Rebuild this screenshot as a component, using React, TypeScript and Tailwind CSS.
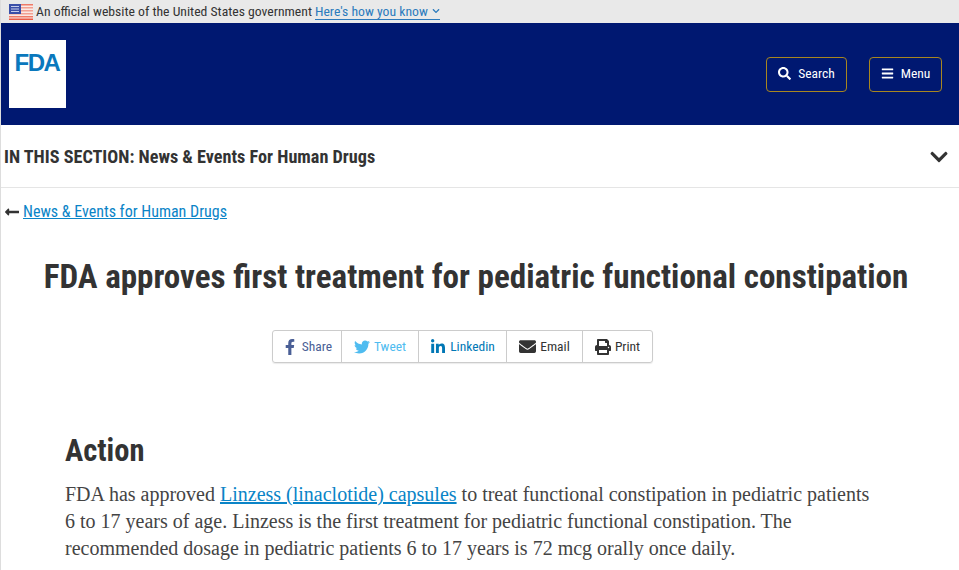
import React from 'react';
import { FaBars, FaChevronDown, FaEnvelope, FaFacebookF, FaLinkedinIn, FaLongArrowAltLeft, FaPrint, FaSearch, FaTwitter } from 'react-icons/fa';

const UsFlag = () => (
  <svg width="24" height="16" viewBox="0 0 24 16" className="shrink-0">
    <rect width="24" height="16" fill="#fbe9e4" />
    <rect y="0" width="24" height="1.5" fill="#ee7a68" />
    <rect y="3" width="24" height="1.5" fill="#f2a092" />
    <rect y="6" width="24" height="1.5" fill="#f2a092" />
    <rect y="9" width="24" height="1.5" fill="#f2a092" />
    <rect y="12" width="24" height="1.5" fill="#ee7a68" />
    <rect y="14.5" width="24" height="1.5" fill="#ea5a45" />
    <rect width="12" height="10" fill="#3a4fa8" />
    <rect x="2" y="2" width="8" height="1" fill="#c5cdea" />
    <rect x="2" y="4.5" width="8" height="1" fill="#c5cdea" />
    <rect x="2" y="7" width="8" height="1" fill="#c5cdea" />
  </svg>
);

function ShareItem({ icon, label, className }: { icon: React.ReactNode; label: string; className: string }) {
  return (
    <a className={`flex h-full items-center justify-center gap-[4px] border-r border-[#cccccc] last:border-r-0 text-[13.5px] ${className}`}>
      {icon}
      <span>{label}</span>
    </a>
  );
}

export default function App() {
  const condensed = "font-['Roboto'] font-stretch-[75%]";

  return (
    <div className="h-[570px] overflow-hidden bg-white border-l border-[#dddddd] font-['Roboto'] text-[#333333]">
      {/* Gov banner */}
      <div className={`flex h-[23px] items-center gap-[3px] bg-[#e9e9e9] pl-[8px] text-[13.7px] ${condensed}`}>
        <UsFlag />
        <span>An official website of the United States government</span>
        <a className="flex items-center gap-1 border-b border-[#2b7bbd] leading-[15px] text-[#2b7bbd]">
          Here's how you know
          <FaChevronDown size={8} />
        </a>
      </div>

      {/* Header */}
      <header className="flex h-[102px] items-start justify-between bg-[#001871] pl-[8px] pr-[17px]">
        <div className="mt-[17px] flex h-[68px] w-[57px] justify-center bg-white pr-[1px] pt-[10px]">
          <span className="font-['Liberation_Sans'] text-[24px] font-bold leading-[26px] tracking-[-1.5px] text-[#0a78bd]">FDA</span>
        </div>
        <div className={`mt-[34px] flex gap-[22px] text-[13.5px] text-white ${condensed}`}>
          <a className="flex h-[35px] w-[81px] items-center justify-center gap-[7px] rounded-[4px] border border-[#a8861f] pb-[2px]">
            <FaSearch size={13} />
            Search
          </a>
          <a className="flex h-[35px] w-[73px] items-center justify-center gap-[7px] rounded-[4px] border border-[#a8861f] pb-[2px]">
            <FaBars size={13} />
            Menu
          </a>
        </div>
      </header>

      {/* Section nav */}
      <div className={`flex h-[63px] items-center justify-between border-b border-[#e5e5e5] pl-[3px] pr-[10px] ${condensed}`}>
        <span className="pt-[2px] text-[18.2px] font-bold">IN THIS SECTION: News &amp; Events For Human Drugs</span>
        <FaChevronDown size={20} className="mt-[2px]" />
      </div>

      {/* Back link */}
      <div className={`flex items-center gap-[3px] pl-[3px] pt-[14px] text-[16px] leading-[20px] ${condensed}`}>
        <FaLongArrowAltLeft size={16} />
        <a className="text-[#0a84c7] underline">News &amp; Events for Human Drugs</a>
      </div>

      {/* Title */}
      <h1 className={`mt-[35px] pr-[8px] text-center text-[33.1px] font-bold leading-[40px] ${condensed}`}>
        FDA approves first treatment for pediatric functional constipation
      </h1>

      {/* Share buttons */}
      <div className="mt-[33px] flex justify-center pr-[35px]">
        <div className={`grid h-[33px] grid-cols-[69px_77px_88px_76px_69px] rounded-[3px] border border-[#cccccc] shadow-[0_1px_1px_rgba(0,0,0,0.08)] ${condensed}`}>
          <ShareItem className="text-[#4a5f96]" label="Share" icon={<FaFacebookF size={16} />} />
          <ShareItem className="text-[#4fbcf0]" label="Tweet" icon={<FaTwitter size={16} />} />
          <ShareItem className="text-[#0077b5]" label="Linkedin" icon={<FaLinkedinIn size={16} />} />
          <ShareItem className="text-[#333333]" label="Email" icon={<FaEnvelope size={17} />} />
          <ShareItem className="text-[#333333]" label="Print" icon={<FaPrint size={16} />} />
        </div>
      </div>

      {/* Body */}
      <div className="mt-[68px] pl-[64px]">
        <h2 className={`text-[30.5px] font-bold leading-[40px] ${condensed}`}>Action</h2>
        <p className="mt-[10px] w-[850px] font-['Liberation_Serif'] text-[20px] leading-[27px] text-[#444444]">
          FDA has approved <a className="text-[#0a84c7] underline">Linzess (linaclotide) capsules</a> to treat functional constipation in pediatric patients
          <br />
          6 to 17 years of age. Linzess is the first treatment for pediatric functional constipation. The
          <br />
          recommended dosage in pediatric patients 6 to 17 years is 72 mcg orally once daily.
        </p>
      </div>
    </div>
  );
}
